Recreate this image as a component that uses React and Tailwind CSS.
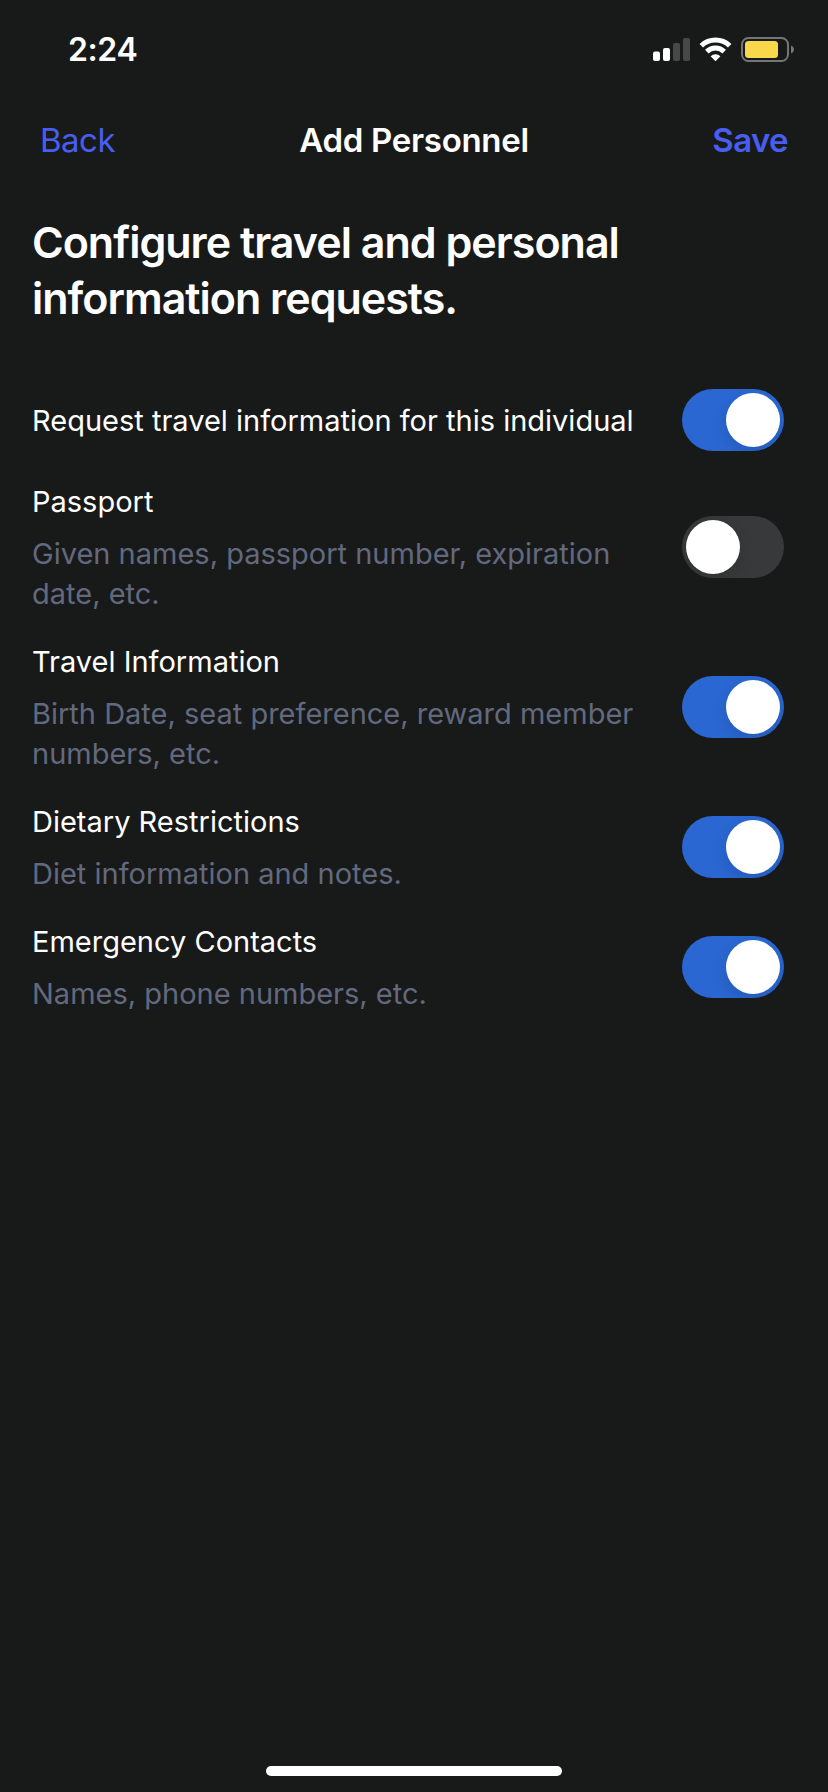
const items = [
  {
    title: "Passport",
    detail: "Given names, passport number, expiration date, etc.",
    on: false,
  },
  {
    title: "Travel Information",
    detail: "Birth Date, seat preference, reward member numbers, etc.",
    on: true,
  },
  { title: "Dietary Restrictions", detail: "Diet information and notes.", on: true },
  { title: "Emergency Contacts", detail: "Names, phone numbers, etc.", on: true },
];

function Toggle({ on, label }) {
  return (
    <button
      type="button"
      role="switch"
      aria-checked={on}
      aria-label={label}
      className={
        "flex h-[62px] w-[102px] shrink-0 items-center overflow-hidden rounded-full p-1 " +
        (on ? "justify-end bg-[#2a67d2]" : "justify-start bg-[#38393b]")
      }
    >
      <span className="size-[54px] rounded-full bg-white shadow-[0_6px_16px_rgba(0,0,0,0.12)]" />
    </button>
  );
}

function StatusIcons() {
  return (
    <svg width="144" height="28" viewBox="652 36 144 28" aria-hidden="true">
      <rect x="653" y="51.5" width="7" height="9.5" rx="2" fill="#fff" />
      <rect x="663" y="48" width="7" height="13" rx="2" fill="#fff" />
      <rect x="673" y="43" width="7" height="18" rx="2" fill="#474848" />
      <rect x="683" y="38" width="7" height="23" rx="2" fill="#474848" />
      <g fill="none" stroke="#fff" strokeWidth="5">
        <path d="M701.3 45.8A20.6 20.6 0 0 1 729.7 45.8" />
        <path d="M706.8 51.6A12.4 12.4 0 0 1 724.2 51.6" />
      </g>
      <path d="M715.5 61.2L710.6 56.2A7 7 0 0 1 720.4 56.2Z" fill="#fff" />
      <rect x="742" y="38" width="46" height="23" rx="6.5" fill="none" stroke="#747575" strokeWidth="2" />
      <rect x="745" y="41" width="33" height="17" rx="3.5" fill="#f8d84a" />
      <path d="M791 45.5C795 47 795 52 791 53.5Z" fill="#747575" />
    </svg>
  );
}

export default function App() {
  return (
    <div className="flex h-[1792px] w-[828px] flex-col bg-[#181a19] font-['Inter',sans-serif] text-white">
      <div className="flex h-[100px] items-center justify-between pr-[32px] pl-[68px]">
        <span className="text-[32px] leading-[40px] font-semibold tracking-[-0.4px]">2:24</span>
        <StatusIcons />
      </div>

      <header className="grid h-20 grid-cols-[1fr_auto_1fr] items-center px-10">
        <button type="button" className="justify-self-start text-[33px] leading-[40px] tracking-[-0.5px] text-[#485ef0]">
          Back
        </button>
        <h1 className="text-[33px] leading-[40px] font-semibold tracking-[-0.3px]">Add Personnel</h1>
        <button type="button" className="justify-self-end text-[33px] leading-[40px] font-semibold tracking-[-0.6px] text-[#485ef0]">
          Save
        </button>
      </header>

      <main className="flex grow flex-col px-8 pt-[34px]">
        <h2 className="text-[43px] leading-[56px] font-semibold tracking-[-1px]">
          Configure travel and personal
          <br />
          information requests.
        </h2>

        <div className="mt-[61px] flex flex-col gap-7 pr-3">
          <div className="flex h-[66px] items-center justify-between">
            <p className="translate-y-px text-[29px] leading-[40px] whitespace-nowrap">
              Request travel information for this individual
            </p>
            <Toggle on label="Request travel information for this individual" />
          </div>
          {items.map((item) => (
            <div key={item.title} className="flex items-center justify-between">
              <div className="flex w-[618px] translate-y-px flex-col gap-3">
                <h3 className="text-[29px] leading-[40px]">{item.title}</h3>
                <p className="text-[29px] leading-[40px] text-[#62697f]">{item.detail}</p>
              </div>
              <Toggle on={item.on} label={item.title} />
            </div>
          ))}
        </div>
      </main>

      <div className="mx-auto mb-4 h-[10px] w-[296px] rounded-full bg-white" />
    </div>
  );
}
